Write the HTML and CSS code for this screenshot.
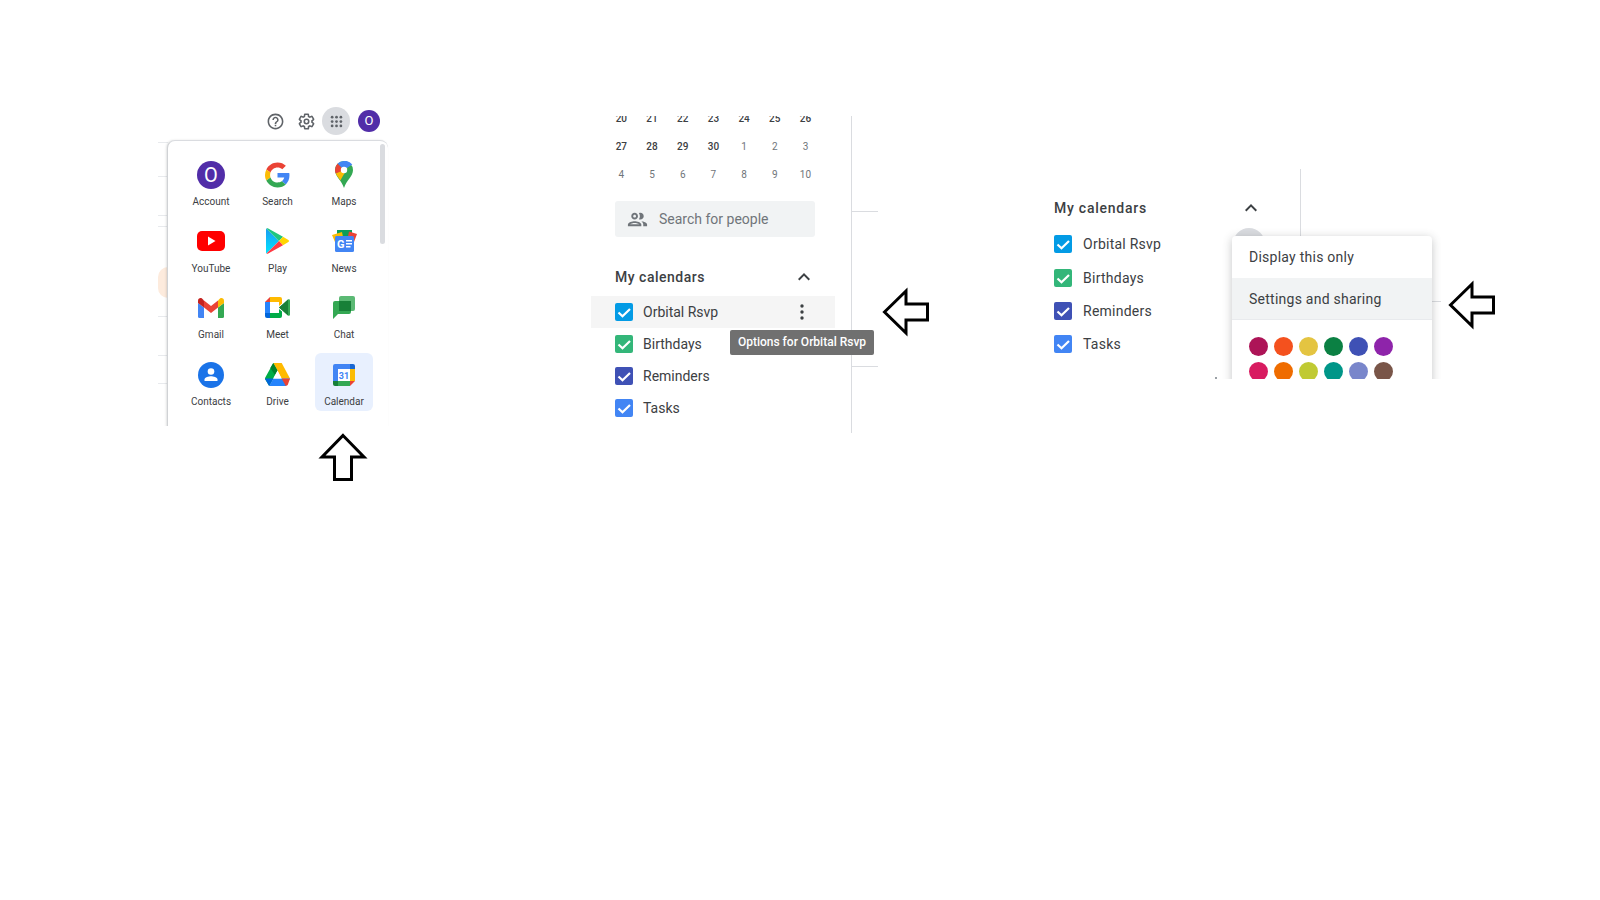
FILE: index.html
```html
<!DOCTYPE html>
<html lang="en">
<head>
    <meta charset="UTF-8">
    <title>Google Calendar settings steps</title>
    <link rel="stylesheet" href="styles.css">
</head>
<body>
    <!-- step 1: app launcher -->
    <section class="shot shot-apps">
        <div class="backdrop">
            <i class="line line-a"></i><i class="line line-b"></i><i class="line line-c"></i><i class="line line-d"></i>
            <i class="line line-e"></i><i class="line line-f"></i><i class="line line-g"></i>
            <i class="blob"></i>
        </div>
        <div class="toolbar">
            <svg class="tool" viewBox="0 0 24 24"><path d="M11 18h2v-2h-2v2zm1-16C6.48 2 2 6.48 2 12s4.48 10 10 10 10-4.48 10-10S17.52 2 12 2zm0 18c-4.41 0-8-3.59-8-8s3.59-8 8-8 8 3.59 8 8-3.59 8-8 8zm0-14c-2.21 0-4 1.79-4 4h2c0-1.1.9-2 2-2s2 .9 2 2c0 2-3 1.75-3 5h2c0-2.25 3-2.5 3-5 0-2.21-1.79-4-4-4z"/></svg>
            <svg class="tool" viewBox="0 0 24 24"><path d="M13.85 22.25h-3.7c-.74 0-1.36-.54-1.45-1.27l-.27-1.89c-.27-.14-.53-.29-.79-.46l-1.8.72c-.7.26-1.47-.03-1.81-.65L2.2 15.53c-.35-.66-.2-1.44.36-1.88l1.53-1.19c-.01-.15-.02-.3-.02-.46 0-.15.01-.31.02-.46l-1.52-1.19c-.59-.45-.74-1.26-.37-1.88l1.85-3.19c.34-.62 1.11-.9 1.79-.63l1.81.73c.26-.17.52-.32.78-.46l.27-1.91c.09-.7.71-1.25 1.44-1.25h3.7c.74 0 1.36.54 1.45 1.27l.27 1.89c.27.14.53.29.79.46l1.8-.72c.71-.26 1.48.03 1.82.65l1.84 3.18c.36.66.2 1.44-.36 1.88l-1.52 1.19c.01.15.02.3.02.46s-.01.31-.02.46l1.52 1.19c.56.45.72 1.23.37 1.86l-1.86 3.22c-.34.62-1.11.9-1.8.63l-1.8-.72c-.26.17-.52.32-.78.46l-.27 1.91c-.1.68-.72 1.22-1.45 1.22zm-3.23-2h2.76l.37-2.55.53-.22c.44-.18.88-.44 1.34-.78l.45-.34 2.38.96 1.38-2.4-2.03-1.58.07-.56c.03-.26.06-.51.06-.78s-.03-.53-.06-.78l-.07-.56 2.03-1.58-1.39-2.4-2.39.96-.45-.35c-.42-.32-.87-.58-1.33-.77l-.52-.22-.37-2.55h-2.76l-.37 2.55-.53.21c-.44.19-.88.44-1.34.79l-.45.33-2.38-.95-1.39 2.39 2.03 1.58-.07.56c-.03.26-.06.53-.06.79s.02.53.06.78l.07.56-2.03 1.58 1.38 2.4 2.39-.96.45.35c.43.33.86.58 1.33.77l.53.22.38 2.55z"/><circle cx="12" cy="12" r="2.8" fill="none" stroke="#5f6368" stroke-width="2"/></svg>
            <div class="grid-btn">
                <svg viewBox="0 0 24 24"><circle cx="5" cy="5" r="2.200"/><circle cx="12" cy="5" r="2.200"/><circle cx="19" cy="5" r="2.200"/><circle cx="5" cy="12" r="2.200"/><circle cx="12" cy="12" r="2.200"/><circle cx="19" cy="12" r="2.200"/><circle cx="5" cy="19" r="2.200"/><circle cx="12" cy="19" r="2.200"/><circle cx="19" cy="19" r="2.200"/></svg>
            </div>
            <div class="avatar">O</div>
        </div>
        <div class="launcher">
            <div class="scrollbar"></div>
            <div class="apps">
                <div class="app">
                    <div class="app-icon"><div class="avatar avatar-big">O</div></div>
                    <span>Account</span>
                </div>
                <div class="app">
                    <div class="app-icon"><svg width="25" height="26" viewBox="0 0 48 48"><path fill="#EA4335" d="M24 9.5c3.54 0 6.71 1.22 9.21 3.6l6.85-6.85C35.9 2.38 30.47 0 24 0 14.62 0 6.51 5.38 2.56 13.22l7.98 6.19C12.43 13.72 17.74 9.5 24 9.5z"/><path fill="#4285F4" d="M46.98 24.55c0-1.57-.15-3.09-.38-4.55H24v9.02h12.94c-.58 2.96-2.26 5.48-4.78 7.18l7.73 6c4.51-4.18 7.09-10.36 7.09-17.65z"/><path fill="#FBBC05" d="M10.53 28.59c-.48-1.45-.76-2.99-.76-4.59s.27-3.14.76-4.59l-7.98-6.19C.92 16.46 0 20.12 0 24c0 3.88.92 7.54 2.56 10.78l7.97-6.19z"/><path fill="#34A853" d="M24 48c6.48 0 11.93-2.13 15.89-5.81l-7.73-6c-2.15 1.45-4.92 2.3-8.16 2.3-6.26 0-11.57-4.22-13.47-9.91l-7.98 6.19C6.51 42.62 14.62 48 24 48z"/></svg></div>
                    <span>Search</span>
                </div>
                <div class="app">
                    <div class="app-icon"><svg width="18" height="27" viewBox="0 0 18 27"><path fill="#34a853" d="M9 0a9 9 0 0 0-9 9c0 6.500 6.500 10 9 18 2.500-8 9-11.500 9-18a9 9 0 0 0-9-9z"/><path fill="#fbbc04" d="M.8 12.600c1.100 2.400 3 4.400 4.500 6.800L12.500 7 9 5z"/><path fill="#ea4335" d="M2.600 2.600A9 9 0 0 0 0 9c0 1.300.3 2.600.8 3.600L9 9z"/><path fill="#4285f4" d="M9 0a9 9 0 0 0-6.400 2.600L9 9l8.300-5.400A9 9 0 0 0 9 0z"/><circle cx="9" cy="9" r="3.200" fill="#fff"/></svg></div>
                    <span>Maps</span>
                </div>
                <div class="app">
                    <div class="app-icon"><svg width="28" height="20" viewBox="0 0 28 20"><rect width="28" height="20" rx="5" fill="#f00"/><path fill="#fff" d="M11 5.500v9l7.500-4.500z"/></svg></div>
                    <span>YouTube</span>
                </div>
                <div class="app">
                    <div class="app-icon"><svg width="23" height="26" viewBox="0 0 23 26"><defs><linearGradient id="playBlue" x1="0" y1="0" x2="0" y2="1"><stop offset="0" stop-color="#1a9bf0"/><stop offset="1" stop-color="#00e5ff"/></linearGradient></defs><path fill="url(#playBlue)" d="M.5.500C.2.800 0 1.200 0 1.800v22.400c0 .6.200 1 .5 1.300L13 13z"/><path fill="#1fc77e" d="M.5.500c.4-.4 1-.5 1.700-.1L17 8.800 13 13z"/><path fill="#ffd500" d="M17 8.800l5 2.900c1.300.7 1.300 1.900 0 2.600l-5 2.900L13 13z"/><path fill="#ff3a44" d="M.5 25.500c.4.400 1 .5 1.700.1L17 17.200 13 13z"/></svg></div>
                    <span>Play</span>
                </div>
                <div class="app">
                    <div class="app-icon"><svg width="25" height="22" viewBox="0 0 25 22"><path fill="#0c9d58" d="M5 0h15v6H5z"/><path fill="#ea4335" d="M17 1.500l8 2.500-3 8h-7z"/><path fill="#fbbc04" d="M0 5l10-3 2 10H3z"/><rect x="3" y="6" width="19" height="16" rx="1.500" fill="#4285f4"/><text class="news-g" x="5" y="18">G</text><path fill="#fff" d="M14 10h6v1.500h-6zM14 13h6v1.500h-6zM14 16h4.500v1.500H14z"/></svg></div>
                    <span>News</span>
                </div>
                <div class="app">
                    <div class="app-icon"><svg width="26" height="20" viewBox="0 0 26 20"><path fill="#4285f4" d="M0 18.500V5l6 4.500V20H1.500A1.500 1.500 0 0 1 0 18.500z"/><path fill="#34a853" d="M20 20V9.500L26 5v13.500a1.500 1.500 0 0 1-1.500 1.500z"/><path fill="#fbbc04" d="M20 2.500v7L26 5V2.500c0-2-2.300-3.200-4-2z"/><path fill="#ea4335" d="M6 9.500v-7L13 8l7-5.500v7L13 15z"/><path fill="#c5221f" d="M0 2.500V5l6 4.500v-7L4 .5C2.300-.7 0 .5 0 2.500z"/></svg></div>
                    <span>Gmail</span>
                </div>
                <div class="app">
                    <div class="app-icon"><svg width="25" height="21" viewBox="0 0 25 21"><path fill="#ea4335" d="M5 0 0 5h5z"/><path fill="#ffba00" d="M5 0v5h9v4l3-2.500V2a2 2 0 0 0-2-2z"/><path fill="#2684fc" d="M0 5v11h5V5z"/><path fill="#0066da" d="M0 16v3a2 2 0 0 0 2 2h3v-5z"/><path fill="#00ac47" d="M5 16h9v-4l3 2.500V19a2 2 0 0 1-2 2H5z"/><path fill="#00832d" d="M14 10.500l3-2.500v5z"/><path fill="#34a853" d="M17 8l6-5.500c.8-.6 2-.1 2 1v14c0 1.100-1.200 1.600-2 1l-6-5.500z"/><path fill="#188038" d="M14 10.500l9-8v16z"/></svg></div>
                    <span>Meet</span>
                </div>
                <div class="app">
                    <div class="app-icon"><svg width="22" height="23" viewBox="0 0 22 23"><rect x="6" width="16" height="15" rx="2" fill="#5bb974"/><path fill="#34a853" d="M2 5h14a2 2 0 0 1 2 2v9a2 2 0 0 1-2 2H5l-5 5V7a2 2 0 0 1 2-2z"/><rect x="6" y="5" width="12" height="10" fill="#188038"/></svg></div>
                    <span>Chat</span>
                </div>
                <div class="app">
                    <div class="app-icon"><svg width="26" height="26" viewBox="0 0 26 26"><circle cx="13" cy="13" r="13" fill="#1a73e8"/><circle cx="13" cy="9.500" r="3.300" fill="#fff"/><path fill="#fff" d="M6.500 17.500c0-2.200 4.300-3.300 6.500-3.300s6.500 1.100 6.500 3.300V19h-13z"/></svg></div>
                    <span>Contacts</span>
                </div>
                <div class="app">
                    <div class="app-icon"><svg width="25" height="23" viewBox="0 0 25 23"><path fill="#00ac47" d="M8.300 0 12.500 7.600 4.200 23 .3 16.500a2 2 0 0 1 0-2z"/><path fill="#ffba00" d="M8.300 0h8.400L25 15.500h-8.400z"/><path fill="#2684fc" d="M8.400 15.500H25l-4.200 7.500H4.200z"/><path fill="#0066da" d="M8.400 15.500H0l.3 1 3.900 6.500z"/><path fill="#ea4335" d="M25 15.500h-8.400l4.200 7.500c.7 0 1.500-.5 2-1.200z"/><path fill="#00832d" d="M8.300 0 12.500 7.600 10 12 5.300 5z"/><path fill="#fff" d="M12.500 7.600l4.100 7.900H8.400z"/></svg></div>
                    <span>Drive</span>
                </div>
                <div class="app app-active">
                    <div class="app-icon"><svg width="22" height="22" viewBox="0 0 22 22"><path fill="#4285f4" d="M2 0h15v5H5v12H0V2a2 2 0 0 1 2-2z"/><path fill="#1967d2" d="M17 0h3a2 2 0 0 1 2 2v3h-5z"/><path fill="#fbbc04" d="M17 5h5v12h-5z"/><path fill="#34a853" d="M5 17h12v5H5z"/><path fill="#188038" d="M0 17h5v5H2a2 2 0 0 1-2-2z"/><path fill="#ea4335" d="M17 17h5l-5 5z"/><rect x="5" y="5" width="12" height="12" fill="#fff"/><text class="cal-num" x="11" y="14.500">31</text></svg></div>
                    <span>Calendar</span>
                </div>
            </div>
        </div>
    </section>

    <!-- step 2: calendar options -->
    <section class="shot shot-options">
        <i class="divider"></i><i class="tick tick-a"></i><i class="tick tick-b"></i>
        <div class="mini-cal">
            <span class="cur">20</span><span class="cur">21</span><span class="cur">22</span><span class="cur">23</span><span class="cur">24</span><span class="cur">25</span><span class="cur">26</span>
            <span class="cur">27</span><span class="cur">28</span><span class="cur">29</span><span class="cur">30</span><span>1</span><span>2</span><span>3</span>
            <span>4</span><span>5</span><span>6</span><span>7</span><span>8</span><span>9</span><span>10</span>
        </div>
        <div class="people">
            <svg viewBox="0 0 24 24"><path d="M9 13.750c-2.340 0-7 1.170-7 3.500V19h14v-1.750c0-2.330-4.660-3.500-7-3.500zM4.340 17c.84-.58 2.870-1.250 4.660-1.250s3.820.67 4.660 1.250H4.340zM9 12c1.930 0 3.500-1.570 3.500-3.500S10.930 5 9 5 5.500 6.570 5.500 8.500 7.070 12 9 12zm0-5c.83 0 1.500.67 1.500 1.500S9.830 10 9 10s-1.500-.67-1.500-1.500S8.170 7 9 7zm7.040 6.810c1.160.84 1.960 1.960 1.960 3.440V19h4v-1.750c0-2.020-3.500-3.170-5.960-3.440zM15 12c1.930 0 3.500-1.570 3.500-3.500S16.930 5 15 5c-.54 0-1.040.13-1.500.35.630.89 1 1.980 1 3.150s-.37 2.260-1 3.150c.46.220.96.350 1.500.350z"/></svg>
            <span>Search for people</span>
        </div>
        <div class="cal-head">
            <span>My calendars</span>
            <svg class="chevron" viewBox="0 0 24 24"><path d="M7.410 15.410 12 10.830l4.590 4.580L18 14l-6-6-6 6z"/></svg>
        </div>
        <div class="cal-row cal-row-hover">
            <i class="check check-sky"><svg viewBox="0 0 18 18"><path d="M3.500 9.500l4 3.800L15 6"/></svg></i>
            <span>Orbital Rsvp</span>
            <svg class="kebab" viewBox="0 0 4 16"><circle cx="2" cy="2" r="1.700"/><circle cx="2" cy="8" r="1.700"/><circle cx="2" cy="14" r="1.700"/></svg>
        </div>
        <div class="cal-row">
            <i class="check check-green"><svg viewBox="0 0 18 18"><path d="M3.500 9.500l4 3.800L15 6"/></svg></i>
            <span>Birthdays</span>
        </div>
        <div class="cal-row">
            <i class="check check-indigo"><svg viewBox="0 0 18 18"><path d="M3.500 9.500l4 3.800L15 6"/></svg></i>
            <span>Reminders</span>
        </div>
        <div class="cal-row">
            <i class="check check-blue"><svg viewBox="0 0 18 18"><path d="M3.500 9.500l4 3.800L15 6"/></svg></i>
            <span>Tasks</span>
        </div>
        <div class="tooltip">Options for Orbital Rsvp</div>
    </section>

    <!-- step 3: settings and sharing -->
    <section class="shot shot-settings">
        <i class="divider"></i><i class="tick tick-c"></i><i class="speck"></i><i class="ripple"></i>
        <div class="cal-head">
            <span>My calendars</span>
            <svg class="chevron" viewBox="0 0 24 24"><path d="M7.410 15.410 12 10.830l4.590 4.580L18 14l-6-6-6 6z"/></svg>
        </div>
        <div class="cal-row">
            <i class="check check-sky"><svg viewBox="0 0 18 18"><path d="M3.500 9.500l4 3.800L15 6"/></svg></i>
            <span>Orbital Rsvp</span>
        </div>
        <div class="cal-row">
            <i class="check check-green"><svg viewBox="0 0 18 18"><path d="M3.500 9.500l4 3.800L15 6"/></svg></i>
            <span>Birthdays</span>
        </div>
        <div class="cal-row">
            <i class="check check-indigo"><svg viewBox="0 0 18 18"><path d="M3.500 9.500l4 3.800L15 6"/></svg></i>
            <span>Reminders</span>
        </div>
        <div class="cal-row">
            <i class="check check-blue"><svg viewBox="0 0 18 18"><path d="M3.500 9.500l4 3.800L15 6"/></svg></i>
            <span>Tasks</span>
        </div>
        <div class="menu">
            <div class="menu-item">Display this only</div>
            <div class="menu-item menu-item-on">Settings and sharing</div>
            <div class="swatches">
                <i style="background:#ad1457"></i><i style="background:#f4511e"></i><i style="background:#e4c441"></i><i style="background:#0b8043"></i><i style="background:#3f51b5"></i><i style="background:#8e24aa"></i>
                <i style="background:#d81b60"></i><i style="background:#ef6c00"></i><i style="background:#c0ca33"></i><i style="background:#009688"></i><i style="background:#7986cb"></i><i style="background:#795548"></i>
            </div>
        </div>
    </section>

    <!-- arrows pointing at each step -->
    <svg class="arrow arrow-up" viewBox="0 0 50 50"><path d="M25 3.500 46 25H33.500V47.500H16.500V25H4z"/></svg>
    <svg class="arrow arrow-left-a" viewBox="0 0 50 50"><path d="M3.500 25 25 4V17H46.500V33H25V46z"/></svg>
    <svg class="arrow arrow-left-b" viewBox="0 0 50 50"><path d="M3.500 25 25 4V17H46.500V33H25V46z"/></svg>
</body>
</html>
```

FILE: styles.css
```css
* {
    box-sizing: border-box;
}

html, body {
    height: 100%;
}

body {
    position: relative;
    margin: 0;
    background: #fff;
    font-family: Roboto, "Liberation Sans", sans-serif;
    color: #3c4043;
    overflow: hidden;
}

i {
    display: block;
    font-style: normal;
}

/* each screenshot is a clipped panel on the white slide */
.shot {
    position: absolute;
    overflow: hidden;
}

.shot-apps {
    left: 158px;
    top: 105px;
    width: 240px;
    height: 321px;
    padding-left: 9px;
}

.shot-options {
    left: 591px;
    top: 116px;
    width: 287px;
    height: 317px;
}

.shot-settings {
    left: 1040px;
    top: 169px;
    width: 401px;
    height: 210px;
    padding-top: 29px;
}

/* step 1 */
.backdrop .line {
    position: absolute;
    left: 0;
    width: 10px;
    height: 1px;
    background: #e8eaed;
}

.line-a { top: 37px; }
.line-b { top: 71px; }
.line-c { top: 110px; }
.line-d { top: 121px; }
.line-e { top: 211px; }
.line-f { top: 250px; }
.line-g { top: 278px; }

.blob {
    position: absolute;
    left: 0;
    top: 162px;
    width: 20px;
    height: 31px;
    border-radius: 10px 0 0 10px;
    background: #fdebdd;
}

.toolbar {
    display: flex;
    align-items: center;
    height: 32px;
    padding-left: 99px;
}

.tool {
    width: 19px;
    height: 19px;
    margin-right: 12px;
    fill: #5f6368;
}

.grid-btn {
    display: flex;
    align-items: center;
    justify-content: center;
    width: 28px;
    height: 28px;
    margin-left: -6px;
    margin-right: 8px;
    border-radius: 50%;
    background: #dadce0;
}

.grid-btn svg {
    width: 15px;
    height: 15px;
    fill: #5f6368;
}

.avatar {
    width: 22px;
    height: 22px;
    border-radius: 50%;
    background: #512da8;
    color: #fff;
    font-size: 13px;
    line-height: 22px;
    text-align: center;
}

.avatar-big {
    width: 28px;
    height: 28px;
    font-size: 20px;
    line-height: 28px;
}

.launcher {
    position: relative;
    width: 221px;
    height: 295px;
    margin-top: 3px;
    padding: 12px 0 0 14px;
    background: #fff;
    border-top: 1px solid #dadce0;
    border-left: 1px solid #d0d2d5;
    border-radius: 8px 8px 0 0;
    box-shadow: -1px 0 2px rgba(60, 64, 67, .15);
}

.scrollbar {
    position: absolute;
    right: 3px;
    top: 3px;
    width: 5px;
    height: 100px;
    border-radius: 3px;
    background: #dadce0;
}

.apps {
    display: grid;
    grid-template-columns: repeat(3, 58px);
    grid-auto-rows: 58px;
    column-gap: 8.5px;
    row-gap: 8.7px;
}

.app {
    display: flex;
    flex-direction: column;
    align-items: center;
    padding-top: 7.5px;
    border-radius: 6px;
    font-size: 10px;
    line-height: 14px;
    color: #3c4043;
}

.app span {
    margin-top: 6.5px;
}

.app-active {
    background: #e8f0fe;
}

.app-icon {
    display: flex;
    align-items: center;
    justify-content: center;
    width: 28px;
    height: 28px;
}

.news-g {
    font-size: 11px;
    font-weight: 700;
    fill: #fff;
}

.cal-num {
    font-size: 9px;
    font-weight: 700;
    fill: #4285f4;
    text-anchor: middle;
}

/* step 2 */
.divider {
    position: absolute;
    top: 0;
    bottom: 0;
    left: 260px;
    width: 1px;
    background: #dadce0;
}

.tick {
    position: absolute;
    height: 1px;
    background: #dadce0;
}

.tick-a { left: 260px; right: 0; top: 95px; }
.tick-b { left: 260px; right: 0; top: 250px; }

.mini-cal {
    display: grid;
    grid-template-columns: repeat(7, 30.7px);
    grid-auto-rows: 28px;
    margin: -12px 0 0 15px;
    font-size: 10px;
    color: #70757a;
}

.mini-cal span {
    display: flex;
    align-items: center;
    justify-content: center;
}

.mini-cal .cur {
    color: #3c4043;
    font-weight: 500;
}

.people {
    display: flex;
    align-items: center;
    gap: 10.5px;
    width: 200px;
    height: 36px;
    margin: 13px 0 0 24px;
    padding-left: 10.5px;
    border-radius: 3px;
    background: #f1f3f4;
    color: #70757a;
    font-size: 14px;
}

.people svg {
    width: 23px;
    height: 23px;
    fill: #70757a;
}

.cal-head {
    display: flex;
    align-items: center;
    justify-content: space-between;
    width: 201px;
    height: 20px;
    margin: 30px 0 9px 24px;
    font-size: 14px;
    font-weight: 500;
    letter-spacing: .5px;
}

.chevron {
    flex: none;
    width: 24px;
    height: 24px;
    fill: #3c4043;
}

.cal-row {
    display: flex;
    align-items: center;
    width: 244px;
    height: 32px;
    padding-left: 24px;
    font-size: 14px;
}

.cal-row-hover {
    background: #f5f5f5;
}

.check {
    flex: none;
    width: 18px;
    height: 18px;
    margin-right: 10px;
    border-radius: 2px;
}

.check svg {
    display: block;
    fill: none;
    stroke: #fff;
    stroke-width: 2.2;
}

.check-sky { background: #039be5; }
.check-green { background: #33b679; }
.check-indigo { background: #3f51b5; }
.check-blue { background: #4285f4; }

.kebab {
    width: 4px;
    height: 16px;
    margin-left: auto;
    margin-right: 31px;
    fill: #3c4043;
}

.tooltip {
    position: absolute;
    left: 139px;
    top: 214px;
    width: 144px;
    height: 25px;
    border-radius: 2px;
    background: #707070;
    color: #fff;
    font-size: 12px;
    font-weight: 500;
    line-height: 25px;
    text-align: center;
}

/* step 3 */
.shot-settings .divider {
    left: 260px;
}

.tick-c {
    left: 392px;
    right: 0;
    top: 132px;
}

.speck {
    position: absolute;
    left: 175px;
    top: 208px;
    width: 2px;
    height: 2px;
    background: #9aa0a6;
}

.ripple {
    position: absolute;
    left: 193px;
    top: 59px;
    width: 32px;
    height: 32px;
    border-radius: 50%;
    background: #dadce0;
}

.shot-settings .cal-head {
    width: 209px;
    margin: 0 0 9.5px 14px;
    letter-spacing: .75px;
}

.shot-settings .cal-row {
    height: 33.4px;
    padding-left: 14px;
    width: 190px;
    letter-spacing: .25px;
}

.shot-settings .check {
    margin-right: 11px;
}

.menu {
    position: absolute;
    left: 192px;
    top: 67px;
    width: 200px;
    height: 200px;
    border-radius: 4px;
    background: #fff;
    box-shadow: 0 2px 10px rgba(60, 64, 67, .3);
}

.menu-item {
    height: 42px;
    padding-left: 17px;
    font-size: 14px;
    letter-spacing: .25px;
    line-height: 42px;
}

.menu-item-on {
    background: #f1f3f4;
    border-bottom: 1px solid #e8eaed;
}

.swatches {
    display: grid;
    grid-template-columns: repeat(6, 19px);
    gap: 6px;
    padding: 17px 0 0 17px;
}

.swatches i {
    width: 19px;
    height: 19px;
    border-radius: 50%;
}

/* big outlined arrows */
.arrow {
    position: absolute;
    width: 50px;
    height: 50px;
    fill: #fff;
    stroke: #000;
    stroke-width: 3;
}

.arrow-up { left: 318px; top: 432px; }
.arrow-left-a { left: 881px; top: 287px; }
.arrow-left-b { left: 1447px; top: 280px; }
```
